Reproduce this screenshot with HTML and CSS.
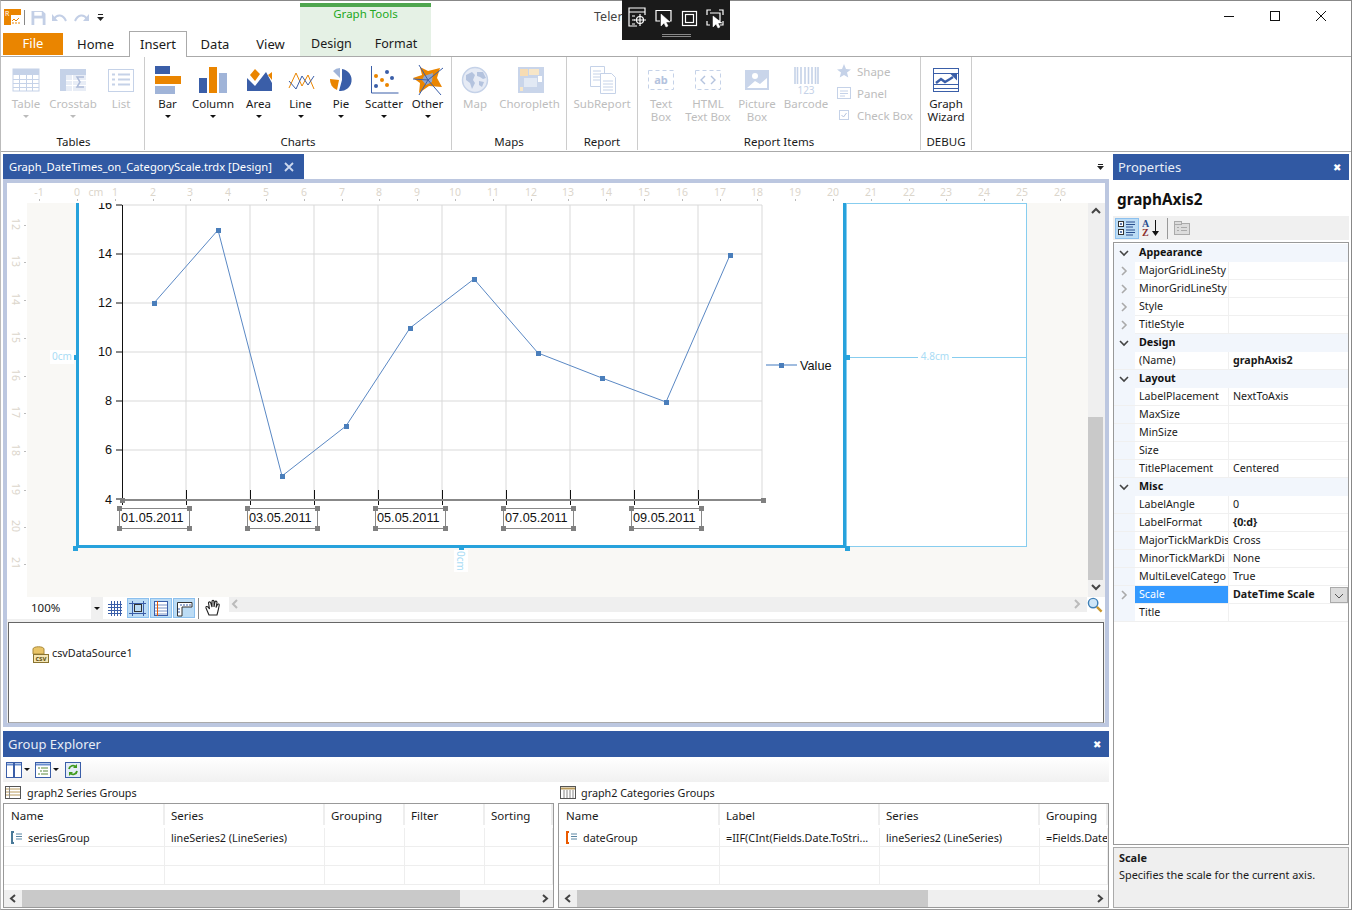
FILE: index.html
```html
<!DOCTYPE html>
<html lang="en">
<head>
    <meta charset="UTF-8">
    <title>Telerik Report Designer</title>
    <link rel="stylesheet" href="styles.css">
</head>
<body>
<div class="window">

    <!-- title bar and ribbon tabs -->
    <header class="top">
        <div class="top-left">
            <div class="qat">
                <svg class="app-icon" width="17" height="16" viewBox="0 0 17 16"><rect width="17" height="16" fill="#ea8500"/><rect x="7" y="6" width="10" height="10" fill="#fff"/><path d="M8 12l2-2 2 2 3-3" fill="none" stroke="#ea8500"/><path d="M8 14h2m1 0h2m1 0h2" stroke="#ea8500"/><text x="1" y="7" class="app-r">R</text></svg>
                <span class="qat-sep"></span>
                <svg class="qat-save" width="15" height="14" viewBox="0 0 15 15"><path d="M0 0h12l3 3v12H0z" fill="#c3cfe6"/><rect x="3" y="1" width="8" height="4" fill="#fff"/><rect x="3" y="8" width="9" height="7" fill="#fff"/></svg>
                <svg class="qat-undo" width="15" height="10" viewBox="0 0 15 10"><path d="M2 6c3-5 9-5 12 2" fill="none" stroke="#c3cfe6" stroke-width="2"/><path d="M0 1v7h6z" fill="#c3cfe6"/></svg>
                <svg class="qat-redo" width="15" height="10" viewBox="0 0 15 10"><path d="M13 6C10 1 4 1 1 8" fill="none" stroke="#c3cfe6" stroke-width="2"/><path d="M15 1v7H9z" fill="#c3cfe6"/></svg>
                <svg class="qat-more" width="7" height="8" viewBox="0 0 7 8"><path d="M1 0h5v1H1zM0 3h7L3.5 7z" fill="#222"/></svg>
            </div>
            <nav class="tabs">
                <div class="tab tab-file">File</div>
                <div class="tab tab-home">Home</div>
                <div class="tab tab-insert">Insert</div>
                <div class="tab tab-data">Data</div>
                <div class="tab tab-view">View</div>
            </nav>
        </div>
        <div class="context">
            <div class="context-name">Graph Tools</div>
            <div class="context-tabs">
                <div class="tab">Design</div>
                <div class="tab">Format</div>
            </div>
        </div>
        <div class="app-title">Telerik</div>
        <div class="win-ctl">
            <svg width="46" height="30" viewBox="0 0 46 30"><path d="M18 15.5h10" stroke="#111"/></svg>
            <svg width="46" height="30" viewBox="0 0 46 30"><rect x="18.5" y="10.5" width="9" height="9" fill="none" stroke="#111"/></svg>
            <svg width="46" height="30" viewBox="0 0 46 30"><path d="M18 10l10 10M28 10L18 20" stroke="#111"/></svg>
        </div>
    </header>

    <!-- screen capture bar lying over the title -->
    <div class="capture-bar">
        <svg width="108" height="39" viewBox="0 0 108 39" fill="none" stroke="#fff" stroke-width="1.2">
            <path d="M23 14V7H7v18h8M7 11h16M10 15h3M10 19h3M10 23h3"/><circle cx="18" cy="19" r="3.500"/><path d="M18 13v12M12 19h12"/>
            <path d="M38 20h-4V9.500h15V20h-1"/><path d="M39 13l0 12 3-3 2 4 2-1-2-4h4z" fill="#fff" stroke="#fff" stroke-width=".5"/>
            <rect x="60.5" y="10.500" width="14" height="14"/><rect x="63.5" y="13.500" width="8" height="8"/>
            <path d="M85 14v-5h4M97 9h4v5M85 20v4h3M101 20v4h-3"/><path d="M88 12h10v8h-2"/><path d="M91 15l0 11 3-3 2 4 2-1-2-4h4z" fill="#fff" stroke="#fff" stroke-width=".5"/>
            <path d="M40 33.500h29M40 35.500h29" stroke="#888" stroke-width="1"/>
        </svg>
    </div>

    <!-- ribbon: Insert tab -->
    <section class="ribbon">
        <div class="group g-tables">
            <div class="group-items">
                <div class="rb off w46"><svg width="32" height="32" viewBox="0 0 32 32"><rect x="3" y="5" width="26" height="22" fill="#fff" stroke="#c5d2e8"/><rect x="3" y="5" width="26" height="6" fill="#c5d2e8"/><path d="M3 15.500h26M3 19.500h26M3 23.500h26M9.500 11v16M16.500 11v16M22.500 11v16" stroke="#c5d2e8"/></svg><span>Table</span><i class="caret"></i></div>
                <div class="rb off w48"><svg width="32" height="32" viewBox="0 0 32 32"><rect x="3" y="5" width="26" height="22" fill="#c5d2e8"/><rect x="9" y="11" width="20" height="16" fill="#e8edf6"/><path d="M9 16.500h20M9 21.500h20M15.500 11v16" stroke="#fff"/><path d="M27 13h-7l3 5-3 5h7" fill="none" stroke="#aebcd9" stroke-width="1.500"/></svg><span>Crosstab</span><i class="caret"></i></div>
                <div class="rb off w48"><svg width="32" height="32" viewBox="0 0 32 32"><rect x="3.500" y="5.500" width="25" height="22" fill="#fff" stroke="#c5d2e8"/><path d="M7 10.500h3m3 0h12M7 15.500h3m3 0h12M7 20.500h3m3 0h12" stroke="#c5d2e8" stroke-width="2"/></svg><span>List</span></div>
            </div>
            <div class="group-name">Tables</div>
        </div>
        <div class="group g-charts">
            <div class="group-items">
                <div class="rb w45"><svg width="32" height="32" viewBox="0 0 32 32"><rect x="3" y="2" width="15" height="8" fill="#3a5ea8"/><rect x="3" y="12" width="26" height="8" fill="#ea8500"/><rect x="3" y="22" width="20" height="8" fill="#a0b4d8"/></svg><span>Bar</span><i class="caret"></i></div>
                <div class="rb w46"><svg width="32" height="32" viewBox="0 0 32 32"><rect x="2" y="14" width="8" height="15" fill="#3a5ea8"/><rect x="12" y="3" width="8" height="26" fill="#ea8500"/><rect x="22" y="9" width="8" height="20" fill="#a0b4d8"/></svg><span>Column</span><i class="caret"></i></div>
                <div class="rb w45"><svg width="32" height="32" viewBox="0 0 32 32"><path d="M4 14l8 8 11-14 6 11v8H4z" fill="#3a5ea8"/><path d="M7 11l5-6 5 5-5 7zM25 11l4-3v8z" fill="#ea8500"/></svg><span>Area</span><i class="caret"></i></div>
                <div class="rb w39"><svg width="32" height="32" viewBox="0 0 32 32"><path d="M4 24l7-15 6 13 6-11 6 14" fill="none" stroke="#ea8500"/><path d="M4 17l7 8 6-13 6 9 6-9" fill="none" stroke="#3a5ea8"/></svg><span>Line</span><i class="caret"></i></div>
                <div class="rb w42"><svg width="32" height="32" viewBox="0 0 32 32"><path d="M17 5a11 11 0 1 1-3 22l3-11z" fill="#3a5ea8"/><path d="M14 16l-9-1a11 11 0 0 0 7 11z" fill="#ea8500"/><path d="M15 14V4a11 11 0 0 0-7 3z" fill="#a0b4d8"/></svg><span>Pie</span><i class="caret"></i></div>
                <div class="rb w44"><svg width="32" height="32" viewBox="0 0 32 32"><path d="M3.500 2v27h27" fill="none" stroke="#3a5ea8"/><circle cx="8" cy="22" r="2" fill="#3a5ea8"/><circle cx="8" cy="12" r="2" fill="#ea8500"/><circle cx="14" cy="16" r="2" fill="#ea8500"/><circle cx="19" cy="8" r="2" fill="#3a5ea8"/><circle cx="19" cy="21" r="2" fill="#ea8500"/><circle cx="24" cy="14" r="2" fill="#3a5ea8"/></svg><span>Scatter</span><i class="caret"></i></div>
                <div class="rb w43"><svg width="32" height="32" viewBox="0 0 32 32"><path d="M8 3l8 4 12-3-3 10 5 9-13-1-10 7 1-10-7-5 9-3z" fill="#ea8500"/><path d="M12 12l9-3-1 9-6 3-4-5z" fill="#8fa6cf"/><path d="M7 1l9 15 15-12M16 16l13 15M16 16L7 31M16 16L1 15" fill="none" stroke="#3a5ea8"/></svg><span>Other</span><i class="caret"></i></div>
            </div>
            <div class="group-name">Charts</div>
        </div>
        <div class="group g-maps">
            <div class="group-items">
                <div class="rb off w46"><svg width="32" height="32" viewBox="0 0 32 32"><circle cx="16" cy="16" r="12.500" fill="#e6ebf5" stroke="#c5d2e8" stroke-width="1.500"/><path d="M7 11l6-3 3 3-2 5 2 3-3 6-2-6-4-3zM18 8h6l3 6-3 1-3-2-3-1zM20 17l5 1-2 5-3-2z" fill="#b4c3de"/></svg><span>Map</span></div>
                <div class="rb off w63"><svg width="32" height="32" viewBox="0 0 32 32"><rect x="4" y="3" width="26" height="26" fill="#c9d5ea"/><path d="M6 5h8v7H6z" fill="#f7dcb3"/><path d="M15 5h10v6H15zM6 23h3v4H6z" fill="#f7e6c8"/><path d="M10 14h13v9H10z" fill="#e2e9f4"/><path d="M24 12h4v6h-4z" fill="#fff"/></svg><span>Choropleth</span></div>
            </div>
            <div class="group-name">Maps</div>
        </div>
        <div class="group g-report">
            <div class="group-items">
                <div class="rb off w70"><svg width="32" height="32" viewBox="0 0 32 32" fill="#fff" stroke="#c5d2e8"><path d="M4.500 2.500h14v20h-14z"/><path d="M7 7h8M7 10h8M7 13h8M7 16h8"/><path d="M14.500 9.500h11l4 4v16h-15z"/><path d="M17 17h10M17 20h10M17 23h10M17 26h10"/></svg><span>SubReport</span></div>
            </div>
            <div class="group-name">Report</div>
        </div>
        <div class="group g-items">
            <div class="group-items">
                <div class="rb off w46"><svg width="32" height="32" viewBox="0 0 32 32"><rect x="3.500" y="6.500" width="25" height="19" fill="none" stroke="#c5d2e8" stroke-dasharray="4 3"/><text x="16" y="20" class="ico-ab">ab</text></svg><span>Text<br>Box</span></div>
                <div class="rb off w48"><svg width="32" height="32" viewBox="0 0 32 32"><rect x="3.500" y="6.500" width="25" height="19" fill="none" stroke="#c5d2e8" stroke-dasharray="4 3"/><path d="M13 12l-4 4 4 4M19 12l4 4-4 4" fill="none" stroke="#b4c3de" stroke-width="1.400"/></svg><span>HTML<br>Text Box</span></div>
                <div class="rb off w50"><svg width="32" height="32" viewBox="0 0 32 32"><rect x="4" y="6" width="24" height="20" fill="#c9d5ea"/><path d="M6 24l8-7 5 3 7-6v10z" fill="#fff"/><circle cx="14" cy="12" r="3" fill="#fff"/></svg><span>Picture<br>Box</span></div>
                <div class="rb off w48"><svg width="32" height="32" viewBox="0 0 32 32"><path d="M5 3v17M7.500 3v17M11 3v17M15 3v17M18.500 3v17M22 3v17M25.500 3v17M28 3v17" stroke="#c5d2e8" stroke-width="1.600"/><text x="16" y="30" class="ico-123">123</text></svg><span>Barcode</span></div>
                <div class="small-col">
                    <div class="sm"><svg width="14" height="14" viewBox="0 0 14 14"><path d="M7 0l2 5 5 .4-4 3.200 1.300 5L7 11l-4.300 2.600 1.300-5-4-3.200L5 5z" fill="#c5d2e8"/></svg><span>Shape</span></div>
                    <div class="sm"><svg width="14" height="12" viewBox="0 0 14 12"><rect x=".5" y=".5" width="13" height="11" fill="#fff" stroke="#c5d2e8"/><path d="M3 4h8M3 6.500h8M3 9h5" stroke="#c5d2e8"/></svg><span>Panel</span></div>
                    <div class="sm"><svg width="14" height="12" viewBox="0 0 14 12"><rect x="2.500" y="1.500" width="9" height="9" fill="#fff" stroke="#c5d2e8"/><path d="M4.500 6l2 2 3-4" fill="none" stroke="#b4c3de"/></svg><span>Check Box</span></div>
                </div>
            </div>
            <div class="group-name">Report Items</div>
        </div>
        <div class="group g-debug">
            <div class="group-items">
                <div class="rb w50"><svg width="32" height="32" viewBox="0 0 32 32"><rect x="3.500" y="4.500" width="25" height="23" fill="#fff" stroke="#3a5ea8"/><path d="M3 9.500h26M3 20.500h26M3 24.500h26" stroke="#3a5ea8"/><path d="M6 19l5-4 4 3 5-3 3-2" fill="none" stroke="#3a5ea8" stroke-width="2.500"/><path d="M20 9.500h7v7z" fill="#3a5ea8"/></svg><span>Graph<br>Wizard</span></div>
            </div>
            <div class="group-name">DEBUG</div>
        </div>
    </section>

    <main class="main">
        <div class="left-col">

            <!-- report design surface -->
            <section class="doc">
                <div class="doc-tabs">
                    <div class="doc-tab">
                        <span>Graph_DateTimes_on_CategoryScale.trdx [Design]</span>
                        <svg width="10" height="10" viewBox="0 0 10 10"><path d="M1 1l8 8M9 1L1 9" stroke="#cdd8ee" stroke-width="1.800"/></svg>
                    </div>
                    <svg class="doc-more" width="7" height="6" viewBox="0 0 7 6"><path d="M1 0h5v1H1zM0 2h7L3.500 6z" fill="#222"/></svg>
                </div>
                <div class="frame">
                    <div class="design-row">
                        <svg class="canvas" width="1081" height="414" viewBox="7 183 1081 414">
                            <rect x="27" y="203" width="1061" height="394" fill="#f9f8f5"/>
                            <!-- report body -->
                            <rect x="846.500" y="203.500" width="180" height="343" fill="#fff" stroke="#87cdef"/>
                            <rect x="78" y="203" width="767" height="343" fill="#fff"/>
                            <!-- grid lines -->
                            <path class="grid" d="M122 205h640M122 254h640M122 303h640M122 352h640M122 401h640M122 450h640M186 205v295M250 205v295M314 205v295M378 205v295M442 205v295M506 205v295M570 205v295M634 205v295M698 205v295M762 205v295"/>
                            <!-- axes -->
                            <path class="axis" d="M122.500 205v300M116 205h6M116 254h6M116 303h6M116 352h6M116 401h6M116 450h6M116 499h6"/>
                            <path class="axis" d="M186.500 490v15M250.500 490v15M314.500 490v15M378.500 490v15M442.500 490v15M506.500 490v15M570.500 490v15M634.500 490v15M698.500 490v15"/>
                            <path class="axis-sel" d="M122 500h641"/>
                            <text class="chart-text" x="112" y="209" text-anchor="end">16</text>
                            <text class="chart-text" x="112" y="258" text-anchor="end">14</text>
                            <text class="chart-text" x="112" y="307" text-anchor="end">12</text>
                            <text class="chart-text" x="112" y="356" text-anchor="end">10</text>
                            <text class="chart-text" x="112" y="405" text-anchor="end">8</text>
                            <text class="chart-text" x="112" y="454" text-anchor="end">6</text>
                            <text class="chart-text" x="112" y="504" text-anchor="end">4</text>
                            <!-- series -->
                            <polyline class="series" points="154,303 218,230 282,476 346,426 410,328 474,279 538,353 602,378 666,402 730,255"/>
                            <g class="marker">
                                <rect x="152" y="301" width="5" height="5"/><rect x="216" y="228" width="5" height="5"/><rect x="280" y="474" width="5" height="5"/><rect x="344" y="424" width="5" height="5"/><rect x="408" y="326" width="5" height="5"/><rect x="472" y="277" width="5" height="5"/><rect x="536" y="351" width="5" height="5"/><rect x="600" y="376" width="5" height="5"/><rect x="664" y="400" width="5" height="5"/><rect x="728" y="253" width="5" height="5"/>
                            </g>
                            <!-- legend -->
                            <path d="M766 365h31" stroke="#a0bcdf" stroke-width="2"/>
                            <rect class="marker" x="779" y="363" width="5" height="5"/>
                            <text class="chart-text" x="800" y="370">Value</text>
                            <!-- selected axis labels -->
                            <g class="sel-box">
                                <rect x="119.500" y="508.500" width="70" height="20"/><rect x="247.500" y="508.500" width="70" height="20"/><rect x="375.500" y="508.500" width="70" height="20"/><rect x="503.500" y="508.500" width="70" height="20"/><rect x="631.500" y="508.500" width="70" height="20"/>
                            </g>
                            <text class="chart-text" x="121" y="522">01.05.2011</text>
                            <text class="chart-text" x="249" y="522">03.05.2011</text>
                            <text class="chart-text" x="377" y="522">05.05.2011</text>
                            <text class="chart-text" x="505" y="522">07.05.2011</text>
                            <text class="chart-text" x="633" y="522">09.05.2011</text>
                            <path class="handles" d="M120 498h5v5h-5zM761 498h5v5h-5zM117 506h5v5h-5zM187 506h5v5h-5zM117 526h5v5h-5zM187 526h5v5h-5zM245 506h5v5h-5zM315 506h5v5h-5zM245 526h5v5h-5zM315 526h5v5h-5zM373 506h5v5h-5zM443 506h5v5h-5zM373 526h5v5h-5zM443 526h5v5h-5zM501 506h5v5h-5zM571 506h5v5h-5zM501 526h5v5h-5zM571 526h5v5h-5zM629 506h5v5h-5zM699 506h5v5h-5zM629 526h5v5h-5zM699 526h5v5h-5z"/>
                            <!-- graph selection frame -->
                            <path class="frame-sel" d="M77.500 203v343.500H845M844.500 203v343"/>
                            <path class="frame-handle" d="M73 546h5v5h-5zM845 546h5v5h-5zM845 355h5v5h-5zM74 355h4v5h-4zM459 546h5v5h-5z"/>
                            <path d="M850 357.500h177" stroke="#87cdef"/>
                            <rect x="918" y="350" width="34" height="14" fill="#fff"/>
                            <text class="dim-text" x="935" y="360" text-anchor="middle">4.8cm</text>
                            <rect x="50" y="350" width="24" height="14" fill="#fff"/>
                            <text class="dim-text" x="52" y="360">0cm</text>
                            <rect x="454" y="550" width="14" height="22" fill="#fff"/>
                            <text class="dim-text" transform="translate(457 551) rotate(90)">0cm</text>
                            <!-- rulers -->
                            <rect x="7" y="183" width="1081" height="20" fill="#fff"/>
                            <rect x="7" y="183" width="20" height="414" fill="#fff"/>
                            <path class="ruler-tick" d="M39.500 199v2M77.500 199v2M115.500 199v2M153.500 199v2M190.500 199v2M228.500 199v2M266.500 199v2M304.500 199v2M342.500 199v2M379.500 199v2M417.500 199v2M455.500 199v2M493.500 199v2M531.500 199v2M568.500 199v2M606.500 199v2M644.500 199v2M682.500 199v2M720.500 199v2M757.500 199v2M795.500 199v2M833.500 199v2M871.500 199v2M909.500 199v2M946.500 199v2M984.500 199v2M1022.500 199v2M1060.500 199v2"/>
                            <g class="ruler-text" text-anchor="middle">
                                <text x="39" y="196">-1</text><text x="77" y="196">0</text><text x="96" y="196">cm</text><text x="115" y="196">1</text><text x="153" y="196">2</text><text x="190" y="196">3</text><text x="228" y="196">4</text><text x="266" y="196">5</text><text x="304" y="196">6</text><text x="342" y="196">7</text><text x="379" y="196">8</text><text x="417" y="196">9</text><text x="455" y="196">10</text><text x="493" y="196">11</text><text x="531" y="196">12</text><text x="568" y="196">13</text><text x="606" y="196">14</text><text x="644" y="196">15</text><text x="682" y="196">16</text><text x="720" y="196">17</text><text x="757" y="196">18</text><text x="795" y="196">19</text><text x="833" y="196">20</text><text x="871" y="196">21</text><text x="909" y="196">22</text><text x="946" y="196">23</text><text x="984" y="196">24</text><text x="1022" y="196">25</text><text x="1060" y="196">26</text>
                                <text transform="translate(12 224) rotate(90)">12</text><text transform="translate(12 261) rotate(90)">13</text><text transform="translate(12 299) rotate(90)">14</text><text transform="translate(12 337) rotate(90)">15</text><text transform="translate(12 375) rotate(90)">16</text><text transform="translate(12 412) rotate(90)">17</text><text transform="translate(12 450) rotate(90)">18</text><text transform="translate(12 489) rotate(90)">19</text><text transform="translate(12 526) rotate(90)">20</text><text transform="translate(12 563) rotate(90)">21</text>
                            </g>
                            <path class="ruler-tick" d="M24 225.500h2M24 262.500h2M24 300.500h2M24 338.500h2M24 376.500h2M24 413.500h2M24 451.500h2M24 490.500h2M24 527.500h2M24 564.500h2"/>
                        </svg>
                        <div class="vscroll">
                            <svg class="vs-btn" width="16" height="14" viewBox="0 0 16 14"><path d="M4 10l4-4 4 4" fill="none" stroke="#444" stroke-width="2"/></svg>
                            <div class="vs-track"></div>
                            <div class="vs-thumb"></div>
                            <svg class="vs-btn" width="16" height="17" viewBox="0 0 16 17"><path d="M4 5l4 4 4-4" fill="none" stroke="#444" stroke-width="2"/></svg>
                        </div>
                    </div>
                    <div class="design-tools">
                        <div class="zoom-combo"><span>100%</span><i class="combo-arrow"></i></div>
                        <svg class="tool" width="22" height="22" viewBox="0 0 22 22"><path d="M3 7.500h14M3 10.500h14M3 13.500h14M3 16.500h14M6.500 4v15M9.500 4v15M12.500 4v15M15.500 4v15" stroke="#3a5ea8"/></svg>
                        <div class="tool-on"><svg width="20" height="20" viewBox="0 0 20 20"><path d="M4.500 2v15M1 14.500h17M15.500 2v15M1 4.500h17" stroke="#3a5ea8" fill="none"/><rect x="6.500" y="5.500" width="7" height="7" fill="none" stroke="#333"/></svg></div>
                        <div class="tool-on"><svg width="20" height="20" viewBox="0 0 20 20"><rect x="3.500" y="2.500" width="13" height="14" fill="#fff" stroke="#3a5ea8"/><path d="M4 6h12M4 9h12M4 12h12M4 15h12" stroke="#7b94c4"/><path d="M6.500 2v15" stroke="#ea5a00"/></svg></div>
                        <div class="tool-on"><svg width="20" height="20" viewBox="0 0 20 20"><path d="M3.500 17V3.500H18V8H8v9z" fill="#fff" stroke="#333"/><path d="M7 5v2M10 5v2M13 5v2M16 5v2M4 10h2M4 13h2" stroke="#3a5ea8"/></svg></div>
                        <span class="tool-sep"></span>
                        <svg class="tool-hand" width="18" height="18" viewBox="0 0 18 18"><path d="M5 16L2 9c-.500-1.500 1-2 2-1l1.500 2L4.500 4c0-1.500 2-1.500 2.300 0L8 8V2.500c0-1.500 2-1.500 2 0V8l1-5c.300-1.500 2-1 2 .500L12 8.500l1.500-3c.800-1 2-.500 1.700 1L14 12l-1 4z" fill="#fff" stroke="#222" stroke-width="1.100"/></svg>
                        <div class="hscroll">
                            <div class="hs-bar">
                                <svg width="12" height="15" viewBox="0 0 12 15"><path d="M8 3L4 7l4 4" fill="none" stroke="#bbb" stroke-width="2"/></svg>
                                <svg width="12" height="15" viewBox="0 0 12 15"><path d="M4 3l4 4-4 4" fill="none" stroke="#bbb" stroke-width="2"/></svg>
                            </div>
                            <svg class="magnifier" width="16" height="16" viewBox="0 0 17 17"><circle cx="6.500" cy="6.500" r="5" fill="#cfe6f7" stroke="#3f7fb5" stroke-width="1.500"/><path d="M10.500 10.500l5 5" stroke="#c8962e" stroke-width="2.500"/></svg>
                        </div>
                    </div>
                    <div class="tray">
                        <div class="tray-item">
                            <svg width="17" height="17" viewBox="0 0 17 17"><path d="M1 3c0-3 11-3 11 0v5H1z" fill="#e9c467" stroke="#a98a3c"/><rect x="1.500" y="8.500" width="15" height="8" fill="#f5e6b5" stroke="#8a7430"/><text x="9" y="15" class="ico-csv">csv</text></svg>
                            <span>csvDataSource1</span>
                        </div>
                    </div>
                </div>
            </section>

            <!-- group explorer -->
            <section class="group-explorer">
                <div class="panel-head"><span>Group Explorer</span><i class="pin">&#10006;</i></div>
                <div class="ge-tools">
                    <svg width="17" height="16" viewBox="0 0 17 16"><rect x=".5" y=".5" width="7" height="15" fill="#fff" stroke="#3a5ea8"/><rect x="8.500" y=".5" width="7" height="15" fill="#fff" stroke="#3a5ea8"/><path d="M1 2.500h6M9 2.500h6" stroke="#6b8fd0" stroke-width="2"/></svg>
                    <i class="ge-arrow"></i>
                    <svg width="17" height="16" viewBox="0 0 17 16"><rect x=".5" y=".5" width="15" height="15" fill="#fff" stroke="#3a5ea8"/><path d="M1 2.500h14" stroke="#6b8fd0" stroke-width="2"/><path d="M3 6h2M6 6h7M5 9h2M8 9h5M3 12h2M6 12h7" stroke="#5d8a3c"/></svg>
                    <i class="ge-arrow"></i>
                    <svg class="ge-refresh" width="16" height="16" viewBox="0 0 16 16"><rect x=".5" y=".5" width="15" height="15" fill="#e3ecf7" stroke="#3a5ea8"/><path d="M4 7a4 4 0 0 1 7-2M12 9a4 4 0 0 1-7 2" fill="none" stroke="#3f9a1e" stroke-width="1.800"/><path d="M12 2v4H8zM4 14v-4h4z" fill="#3f9a1e"/></svg>
                </div>
                <div class="ge-body">
                    <div class="ge-pane">
                        <div class="ge-title">
                            <svg width="16" height="13" viewBox="0 0 16 13"><rect x=".5" y=".5" width="15" height="12" fill="#fff" stroke="#555"/><path d="M1 3h14M1 6h14M1 9h14" stroke="#b89a5c"/><path d="M4.500 1v11" stroke="#888"/></svg>
                            <span>graph2 Series Groups</span>
                        </div>
                        <div class="ge-table">
                            <div class="ge-grid cols-series">
                                <div class="gh">Name</div><div class="gh">Series</div><div class="gh">Grouping</div><div class="gh">Filter</div><div class="gh">Sorting</div>
                                <div class="gc gc-name"><svg width="12" height="13" viewBox="0 0 12 13"><path d="M3 1H1v11h2" fill="none" stroke="#4a7a99" stroke-width="2"/><path d="M5 3h6M5 5.500h6M5 8h6" stroke="#5a86a3"/></svg>seriesGroup</div><div class="gc">lineSeries2 (LineSeries)</div><div class="gc"></div><div class="gc"></div><div class="gc"></div>
                                <div class="gc"></div><div class="gc"></div><div class="gc"></div><div class="gc"></div><div class="gc"></div>
                                <div class="gc"></div><div class="gc"></div><div class="gc"></div><div class="gc"></div><div class="gc"></div>
                            </div>
                            <div class="ge-scroll">
                                <svg width="18" height="17" viewBox="0 0 18 17"><path d="M11 5L7 8.500l4 3.500" fill="none" stroke="#444" stroke-width="2"/></svg>
                                <div class="ge-thumb thumb-series"></div>
                                <div class="ge-track"></div>
                                <svg width="16" height="17" viewBox="0 0 16 17"><path d="M6 5l4 3.500L6 12" fill="none" stroke="#444" stroke-width="2"/></svg>
                            </div>
                        </div>
                    </div>
                    <div class="ge-pane">
                        <div class="ge-title ge-title-cat">
                            <svg width="16" height="13" viewBox="0 0 16 13"><rect x=".5" y=".5" width="15" height="12" fill="#fff" stroke="#555"/><path d="M1 2.500h14" stroke="#b89a5c" stroke-width="2"/><path d="M4 4v8M7 4v8M10 4v8M13 4v8" stroke="#888"/></svg>
                            <span>graph2 Categories Groups</span>
                        </div>
                        <div class="ge-table">
                            <div class="ge-grid cols-cats">
                                <div class="gh">Name</div><div class="gh">Label</div><div class="gh">Series</div><div class="gh">Grouping</div>
                                <div class="gc gc-name"><svg width="12" height="13" viewBox="0 0 12 13"><path d="M3 1H1v11h2" fill="none" stroke="#ea5a00" stroke-width="2"/><path d="M5 3h6M5 5.500h6M5 8h6" stroke="#5a86a3"/></svg>dateGroup</div><div class="gc">=IIF(CInt(Fields.Date.ToStri...</div><div class="gc">lineSeries2 (LineSeries)</div><div class="gc">=Fields.Date</div>
                                <div class="gc"></div><div class="gc"></div><div class="gc"></div><div class="gc"></div>
                                <div class="gc"></div><div class="gc"></div><div class="gc"></div><div class="gc"></div>
                            </div>
                            <div class="ge-scroll">
                                <svg width="18" height="17" viewBox="0 0 18 17"><path d="M11 5L7 8.500l4 3.500" fill="none" stroke="#444" stroke-width="2"/></svg>
                                <div class="ge-thumb thumb-cats"></div>
                                <div class="ge-track"></div>
                                <svg width="16" height="17" viewBox="0 0 16 17"><path d="M6 5l4 3.500L6 12" fill="none" stroke="#444" stroke-width="2"/></svg>
                            </div>
                        </div>
                    </div>
                </div>
            </section>
        </div>

        <!-- properties panel -->
        <aside class="properties">
            <div class="panel-head"><span>Properties</span><i class="pin">&#10006;</i></div>
            <div class="prop-object">graphAxis2</div>
            <div class="prop-tools">
                <div class="pt-on"><svg width="20" height="18" viewBox="0 0 20 18"><rect x="1.500" y="2.500" width="5" height="5" fill="#fff" stroke="#333"/><rect x="1.500" y="10.500" width="5" height="5" fill="#fff" stroke="#333"/><path d="M3 5h2M4 4v2M3 13h2M4 12v2M9 3h9M9 5.500h9M9 8h7M9 11h9M9 13.500h9M9 16h7" stroke="#2a4f8f"/></svg></div>
                <svg class="pt-az" width="18" height="18" viewBox="0 0 18 18"><text x="0" y="8" class="ico-az ico-a">A</text><text x="0" y="17" class="ico-az ico-z">Z</text><path d="M13.500 1v14" stroke="#111"/><path d="M10 12h7l-3.500 5z" fill="#111"/></svg>
                <span class="pt-sep"></span>
                <svg class="pt-pages" width="16" height="14" viewBox="0 0 16 14"><rect x=".5" y="2.500" width="15" height="11" fill="#dcdcdc" stroke="#aaa"/><rect x=".5" y=".5" width="7" height="3" fill="#dcdcdc" stroke="#aaa"/><path d="M3 6.500h2m2 0h6M3 9.500h2m2 0h6" stroke="#aaa"/></svg>
            </div>
            <div class="prop-grid">
                <div class="cat"><svg class="chev" width="21" height="18" viewBox="0 0 21 18"><path d="M6 7l4 4 4-4" fill="none" stroke="#444" stroke-width="1.600"/></svg>Appearance</div>
                <div class="row"><svg class="chev" width="21" height="18" viewBox="0 0 21 18"><path d="M8 5l4 4-4 4" fill="none" stroke="#aaa" stroke-width="1.600"/></svg><div class="pn">MajorGridLineSty</div><div class="pv"></div></div>
                <div class="row"><svg class="chev" width="21" height="18" viewBox="0 0 21 18"><path d="M8 5l4 4-4 4" fill="none" stroke="#aaa" stroke-width="1.600"/></svg><div class="pn">MinorGridLineSty</div><div class="pv"></div></div>
                <div class="row"><svg class="chev" width="21" height="18" viewBox="0 0 21 18"><path d="M8 5l4 4-4 4" fill="none" stroke="#aaa" stroke-width="1.600"/></svg><div class="pn">Style</div><div class="pv"></div></div>
                <div class="row"><svg class="chev" width="21" height="18" viewBox="0 0 21 18"><path d="M8 5l4 4-4 4" fill="none" stroke="#aaa" stroke-width="1.600"/></svg><div class="pn">TitleStyle</div><div class="pv"></div></div>
                <div class="cat"><svg class="chev" width="21" height="18" viewBox="0 0 21 18"><path d="M6 7l4 4 4-4" fill="none" stroke="#444" stroke-width="1.600"/></svg>Design</div>
                <div class="row"><i class="gut"></i><div class="pn">(Name)</div><div class="pv bold">graphAxis2</div></div>
                <div class="cat"><svg class="chev" width="21" height="18" viewBox="0 0 21 18"><path d="M6 7l4 4 4-4" fill="none" stroke="#444" stroke-width="1.600"/></svg>Layout</div>
                <div class="row"><i class="gut"></i><div class="pn">LabelPlacement</div><div class="pv">NextToAxis</div></div>
                <div class="row"><i class="gut"></i><div class="pn">MaxSize</div><div class="pv"></div></div>
                <div class="row"><i class="gut"></i><div class="pn">MinSize</div><div class="pv"></div></div>
                <div class="row"><i class="gut"></i><div class="pn">Size</div><div class="pv"></div></div>
                <div class="row"><i class="gut"></i><div class="pn">TitlePlacement</div><div class="pv">Centered</div></div>
                <div class="cat"><svg class="chev" width="21" height="18" viewBox="0 0 21 18"><path d="M6 7l4 4 4-4" fill="none" stroke="#444" stroke-width="1.600"/></svg>Misc</div>
                <div class="row"><i class="gut"></i><div class="pn">LabelAngle</div><div class="pv">0</div></div>
                <div class="row"><i class="gut"></i><div class="pn">LabelFormat</div><div class="pv bold">{0:d}</div></div>
                <div class="row"><i class="gut"></i><div class="pn">MajorTickMarkDis</div><div class="pv">Cross</div></div>
                <div class="row"><i class="gut"></i><div class="pn">MinorTickMarkDi</div><div class="pv">None</div></div>
                <div class="row"><i class="gut"></i><div class="pn">MultiLevelCatego</div><div class="pv">True</div></div>
                <div class="row"><svg class="chev" width="21" height="18" viewBox="0 0 21 18"><path d="M8 5l4 4-4 4" fill="none" stroke="#aaa" stroke-width="1.600"/></svg><div class="pn selected">Scale</div><div class="pv bold">DateTime Scale<span class="pv-drop"><svg width="16" height="15" viewBox="0 0 16 15"><path d="M4 6l4 4 4-4" fill="none" stroke="#555"/></svg></span></div></div>
                <div class="row"><i class="gut"></i><div class="pn">Title</div><div class="pv"></div></div>
            </div>
            <div class="prop-help">
                <div class="help-title">Scale</div>
                <div>Specifies the scale for the current axis.</div>
            </div>
        </aside>
    </main>
</div>
</body>
</html>
```

FILE: styles.css
```css
* {
    margin: 0;
    padding: 0;
    box-sizing: border-box;
}

body {
    width: 1352px;
    height: 910px;
    overflow: hidden;
    background: #fff;
    font-family: 'Noto Sans', sans-serif;
    font-size: 11.5px;
    color: #1a1a1a;
}

svg {
    display: block;
    flex: none;
}

.window {
    position: relative;
    height: 910px;
    display: flex;
    flex-direction: column;
    border-top: 1px solid #888;
    border-right: 1px solid #888;
    border-left: 1px solid #bbb;
    border-bottom: 1px solid #999;
}

/* Title bar */
.top {
    height: 55px;
    display: flex;
    flex: none;
}

.top-left {
    width: 299px;
    display: flex;
    flex-direction: column;
}

.qat {
    height: 30px;
    padding: 8px 0 0 3px;
    display: flex;
    align-items: flex-start;
}

.app-r {
    font-size: 7px;
    fill: #fff;
}

.qat-sep {
    width: 1px;
    height: 15px;
    margin: 1px 6px 0 3px;
    background: #888;
}

.qat-save { margin-top: 2px; }
.qat-undo { margin: 4px 0 0 6px; }
.qat-redo { margin: 4px 0 0 7px; }
.qat-more { margin: 5px 0 0 8px; }

.tabs {
    height: 25px;
    display: flex;
    padding-left: 2px;
    align-items: flex-end;
}

.tab {
    font-size: 13px;
    line-height: 23px;
    text-align: center;
}

.tab-file {
    width: 60px;
    height: 22px;
    line-height: 20px;
    margin-bottom: 1px;
    background: #ea8500;
    color: #fff;
}

.tab-home { width: 65px; }

.tab-insert {
    width: 58px;
    height: 26px;
    line-height: 25px;
    margin: 0 0 -1px 1px;
    background: #fff;
    border: 1px solid #aaa;
    border-bottom: 0;
    position: relative;
    z-index: 1;
}

.tab-data { width: 56px; }
.tab-view { width: 55px; }

.context {
    width: 131px;
    height: 53px;
    margin-top: 2px;
    background: #e5f1e5;
    border-top: 4px solid #4ea64e;
}

.context-name {
    height: 25px;
    text-align: center;
    font-size: 11.5px;
    line-height: 13px;
    color: #22a822;
}

.context-tabs {
    display: flex;
    gap: 23px;
    padding-left: 11px;
}

.context-tabs .tab { font-size: 12.500px; }

.app-title {
    flex: 1;
    padding: 7px 0 0 163px;
    font-size: 12.500px;
    color: #444;
}

.win-ctl {
    display: flex;
    padding-right: 7px;
}

.capture-bar {
    position: absolute;
    left: 621px;
    top: -1px;
    width: 108px;
    height: 40px;
    background: #1a1a1a;
    z-index: 5;
    padding-top: 1px;
}

/* Ribbon */
.ribbon {
    height: 96px;
    flex: none;
    display: flex;
    border-top: 1px solid #aaa;
    border-bottom: 1px solid #aaa;
}

.group {
    display: flex;
    flex-direction: column;
    border-right: 1px solid #ccc;
    margin-bottom: 1px;
}

.g-tables { width: 144px; padding-left: 2px; }
.g-charts { width: 307px; }
.g-maps { width: 115px; }
.g-report { width: 71px; }
.g-items { width: 283px; }
.g-debug { width: 51px; }

.group-items {
    flex: 1;
    display: flex;
    padding-top: 7px;
}

.group-name {
    height: 15px;
    line-height: 14px;
    text-align: center;
}

.rb {
    display: flex;
    flex-direction: column;
    align-items: center;
    line-height: 13px;
    flex: none;
    position: relative;
}

.rb span {
    margin-top: 1px;
    text-align: center;
    white-space: nowrap;
}

.off { color: #bdbdbd; }

.w39 { width: 39px; }
.w42 { width: 42px; }
.w43 { width: 43px; }
.w44 { width: 44px; }
.w45 { width: 45px; }
.w46 { width: 46px; }
.w48 { width: 48px; }
.w50 { width: 50px; }
.w63 { width: 63px; }
.w70 { width: 70px; }

.caret {
    margin-top: 5px;
    border: 3px solid transparent;
    border-top: 3px solid #111;
    border-bottom: 0;
}

.off .caret { border-top-color: #bbb; }

.small-col {
    padding: 0 0 0 7px;
    margin-top: -2px;
    display: flex;
    flex-direction: column;
    color: #bdbdbd;
    gap: 4px;
}

.sm {
    height: 18px;
    display: flex;
    align-items: center;
    gap: 6px;
}

.ico-ab {
    font-size: 11px;
    font-weight: bold;
    fill: #b4c3de;
    text-anchor: middle;
}

.ico-123 {
    font-size: 10px;
    fill: #c5d2e8;
    text-anchor: middle;
}

.ico-csv {
    font-size: 7px;
    font-weight: bold;
    fill: #6b5a20;
    text-anchor: middle;
}

/* Main area */
.main {
    flex: 1;
    min-height: 0;
    display: flex;
    gap: 4px;
    padding: 2px 2px 1px 2px;
}

.left-col {
    width: 1106px;
    display: flex;
    flex-direction: column;
    gap: 4px;
}

.doc {
    height: 573px;
    display: flex;
    flex-direction: column;
}

.doc-tabs {
    height: 25px;
    flex: none;
    display: flex;
    align-items: center;
    justify-content: space-between;
    padding-right: 5px;
}

.doc-tab {
    width: 301px;
    height: 25px;
    padding: 0 10px 0 6px;
    display: flex;
    align-items: center;
    justify-content: space-between;
    background: #3159a3;
    color: #fff;
    font-size: 11.200px;
    white-space: nowrap;
}

.frame {
    flex: 1;
    min-height: 0;
    border: 4px solid #bcc7e0;
    display: flex;
    flex-direction: column;
    background: #f0f0f0;
}

.design-row {
    display: flex;
    height: 414px;
    flex: none;
    background: #fff;
}

/* Chart on the design canvas */
.grid {
    fill: none;
    stroke: #d9d9d9;
}

.axis {
    fill: none;
    stroke: #111;
}

.axis-sel {
    stroke: #888;
    stroke-width: 2;
}

.chart-text {
    font-family: 'Liberation Sans', sans-serif;
    font-size: 12.700px;
    fill: #111;
}

.series {
    fill: none;
    stroke: #5a88c4;
}

.marker { fill: #4a7ebb; }

.sel-box rect {
    fill: #fff;
    stroke: #888;
}

.handles { fill: #808080; }

.frame-sel {
    fill: none;
    stroke: #27a2dc;
    stroke-width: 3;
}

.frame-handle { fill: #27a2dc; }

.dim-text {
    font-size: 10px;
    fill: #a9dcf5;
}

.ruler-text {
    font-size: 10.500px;
    fill: #dcd6cc;
}

.ruler-tick { stroke: #bbb; }

.vscroll {
    width: 17px;
    margin-top: 20px;
    display: flex;
    flex-direction: column;
    background: #efefef;
}

.vs-btn { flex: none; }
.vs-track { height: 200px; }

.vs-thumb {
    height: 163px;
    margin-right: 2px;
    background: #c9c9c9;
}

.design-tools {
    height: 22px;
    flex: none;
    display: flex;
    padding-left: 21px;
    background: #fff;
}

.zoom-combo {
    width: 75px;
    display: flex;
    align-items: center;
    justify-content: space-between;
    padding-left: 3px;
    font-size: 11.500px;
}

.zoom-combo span { margin-top: -2px; }

.combo-arrow {
    width: 12px;
    height: 22px;
    background: #f0f0f0;
    position: relative;
}

.combo-arrow::after {
    content: '';
    position: absolute;
    left: 3px;
    top: 10px;
    border: 3px solid transparent;
    border-top: 3px solid #111;
    border-bottom: 0;
}

.tool { margin-left: 2px; }

.tool-on {
    width: 22px;
    height: 20px;
    margin: 1px 1px 0 0;
    display: flex;
    justify-content: center;
    background: #bcdcf5;
    border: 1px solid #8cc0ee;
}

.tool-on:first-of-type { margin-left: 1px; }

.tool-sep {
    width: 1px;
    margin: 1px 5px 0 2px;
    background: #888;
}

.tool-hand { margin-top: 2px; }

.hscroll {
    flex: 1;
    margin-left: 7px;
    padding-right: 2px;
    display: flex;
    align-items: flex-start;
}

.hs-bar {
    flex: 1;
    height: 15px;
    display: flex;
    justify-content: space-between;
    background: #efefef;
    padding-right: 4px;
}

.tray {
    flex: 1;
    margin: 3px 1px 0 1px;
    background: #fff;
    border: 1px solid #666;
    border-bottom-color: #aaa;
    padding: 23px 0 0 23px;
}

.tray-item {
    display: flex;
    gap: 3px;
    align-items: flex-start;
    line-height: 14px;
    font-size: 10.800px;
}

/* Panel headers */
.panel-head {
    height: 26px;
    flex: none;
    display: flex;
    align-items: center;
    justify-content: space-between;
    padding: 0 8px 0 5px;
    background: #3159a3;
    color: #e8edf6;
    font-size: 13px;
}

.pin {
    font-size: 10px;
    font-style: normal;
    color: #fff;
}

/* Group explorer */
.group-explorer {
    flex: 1;
    min-height: 0;
    display: flex;
    flex-direction: column;
}

.ge-tools {
    height: 25px;
    flex: none;
    display: flex;
    align-items: center;
    padding-left: 3px;
    background: linear-gradient(#fff, #f1f1f1);
}

.ge-arrow {
    width: 5px;
    margin: 0 5px 0 1px;
    border: 3px solid transparent;
    border-top: 3px solid #111;
    border-bottom: 0;
}

.ge-refresh { margin-left: 1px; }

.ge-body {
    flex: 1;
    min-height: 0;
    display: flex;
    gap: 4px;
}

.ge-pane {
    width: 551px;
    display: flex;
    flex-direction: column;
}

.ge-title {
    height: 21px;
    flex: none;
    display: flex;
    align-items: center;
    gap: 6px;
    padding-left: 2px;
    font-size: 10.800px;
    white-space: nowrap;
}

.ge-title-cat { gap: 5px; }

.ge-table {
    flex: 1;
    min-height: 0;
    display: flex;
    flex-direction: column;
    border: 1px solid #999;
    overflow: hidden;
}

.ge-grid {
    flex: 1;
    min-height: 0;
    display: grid;
    grid-template-rows: 24px 19px 19px 19px;
    overflow: hidden;
}

.cols-series { grid-template-columns: 161px 160px 80px 80px 1fr; }
.cols-cats { grid-template-columns: 161px 160px 160px 1fr; }

.gh {
    padding: 4px 0 0 7px;
    border-right: 2px solid #eee;
    margin-bottom: 3px;
    white-space: nowrap;
    overflow: hidden;
}

.gh + .gh { padding-left: 6px; }

.gc {
    padding-left: 6px;
    line-height: 20px;
    font-size: 10.800px;
    border-right: 1px solid #eee;
    border-bottom: 1px solid #eee;
    white-space: nowrap;
    overflow: hidden;
}

.gc-name {
    display: flex;
    align-items: center;
    gap: 5px;
    padding: 1px 0 0 7px;
}

.ge-scroll {
    height: 17px;
    flex: none;
    display: flex;
    background: #efefef;
}

.ge-thumb { background: #c9c9c9; }
.thumb-series { width: 438px; }
.thumb-cats { width: 351px; }
.ge-track { flex: 1; }

/* Properties panel */
.properties {
    width: 236px;
    display: flex;
    flex-direction: column;
}

.prop-object {
    height: 36px;
    padding: 7px 0 0 4px;
    font-size: 15.300px;
    font-weight: bold;
    color: #111;
    line-height: 24px;
}

.prop-tools {
    height: 24px;
    flex: none;
    display: flex;
    align-items: center;
    padding-left: 2px;
    background: #f0f0f0;
}

.pt-on {
    width: 24px;
    height: 21px;
    display: flex;
    justify-content: center;
    align-items: center;
    background: #bcdcf5;
    border: 1px solid #8cc0ee;
}

.pt-az { margin-left: 3px; }

.ico-az {
    font-family: 'Liberation Serif', serif;
    font-size: 10px;
    font-weight: bold;
}

.ico-a { fill: #2a4f8f; }
.ico-z { fill: #8c2f2f; }

.pt-sep {
    width: 1px;
    height: 21px;
    margin: 0 6px 0 7px;
    background: #999;
}

.prop-grid {
    height: 603px;
    flex: none;
    margin-top: 2px;
    padding-top: 1px;
    border: 1px solid #999;
    background: #fff;
}

.cat {
    height: 18px;
    display: flex;
    align-items: center;
    font-weight: bold;
    font-size: 10.700px;
    padding-bottom: 2px;
    background: #f2f6fc;
    color: #111;
}

.cat .chev { margin: 0 4px -2px 0; }

.row {
    height: 18px;
    display: flex;
    font-size: 10.700px;
    line-height: 17px;
    border-bottom: 1px solid #f0f0f0;
}

.chev,
.gut {
    width: 21px;
    flex: none;
    background: #f2f6fc;
}

.pn {
    width: 94px;
    flex: none;
    padding-left: 4px;
    white-space: nowrap;
    overflow: hidden;
    border-right: 1px solid #f0f0f0;
}

.pv {
    flex: 1;
    padding-left: 4px;
    position: relative;
    white-space: nowrap;
    overflow: hidden;
}

.bold { font-weight: bold; }

.selected {
    background: #3399ff;
    color: #fff;
}

.pv-drop {
    position: absolute;
    right: 0;
    top: 1px;
    width: 18px;
    height: 16px;
    background: #dcdcdc;
    border: 1px solid #aaa;
}

.prop-help {
    flex: 1;
    margin-top: 2px;
    padding: 1px 5px;
    font-size: 10.900px;
    line-height: 17px;
    background: #efefef;
    border: 1px solid #aaa;
}

.help-title { font-weight: bold; }
```
